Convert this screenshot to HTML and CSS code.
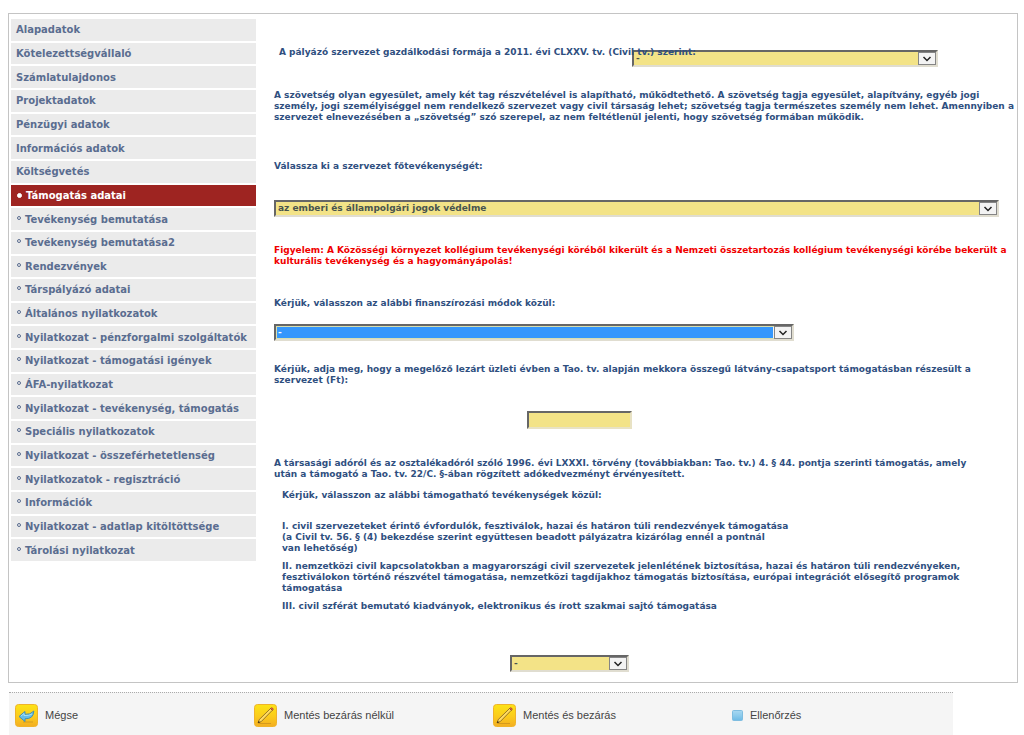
FILE: index.html
```html
<!DOCTYPE html>
<html lang="hu">
<head>
<meta charset="utf-8">
<title>Támogatás adatai</title>
<link rel="stylesheet" href="styles.css">
</head>
<body>
<main class="panel">
  <nav class="menu">
    <a href="#">Alapadatok</a>
    <a href="#">Kötelezettségvállaló</a>
    <a href="#">Számlatulajdonos</a>
    <a href="#">Projektadatok</a>
    <a href="#">Pénzügyi adatok</a>
    <a href="#">Információs adatok</a>
    <a href="#">Költségvetés</a>
    <a href="#" class="active sub" aria-current="page">Támogatás adatai</a>
    <a href="#" class="sub">Tevékenység bemutatása</a>
    <a href="#" class="sub">Tevékenység bemutatása2</a>
    <a href="#" class="sub">Rendezvények</a>
    <a href="#" class="sub">Társpályázó adatai</a>
    <a href="#" class="sub">Általános nyilatkozatok</a>
    <a href="#" class="sub">Nyilatkozat - pénzforgalmi szolgáltatók</a>
    <a href="#" class="sub">Nyilatkozat - támogatási igények</a>
    <a href="#" class="sub">ÁFA-nyilatkozat</a>
    <a href="#" class="sub">Nyilatkozat - tevékenység, támogatás</a>
    <a href="#" class="sub">Speciális nyilatkozatok</a>
    <a href="#" class="sub">Nyilatkozat - összeférhetetlenség</a>
    <a href="#" class="sub">Nyilatkozatok - regisztráció</a>
    <a href="#" class="sub">Információk</a>
    <a href="#" class="sub">Nyilatkozat - adatlap kitöltöttsége</a>
    <a href="#" class="sub">Tárolási nyilatkozat</a>
  </nav>
  <form class="content" id="form">
    <div class="legal-form">
      <label for="legal">A pályázó szervezet gazdálkodási formája a 2011. évi CLXXV. tv. (Civil tv.) szerint:</label>
      <div class="select"><select id="legal"><option>-</option></select><svg viewBox="0 0 18 13"><rect x=".5" y=".5" width="17" height="12"/><path d="M5.500 5L9 8.500L12.500 5"/></svg></div>
    </div>
    <p class="note">A szövetség olyan egyesület, amely két tag részvételével is alapítható, működtethető. A szövetség tagja egyesület, alapítvány, egyéb jogi<br>személy, jogi személyiséggel nem rendelkező szervezet vagy civil társaság lehet; szövetség tagja természetes személy nem lehet. Amennyiben a<br>szervezet elnevezésében a „szövetség” szó szerepel, az nem feltétlenül jelenti, hogy szövetség formában működik.</p>
    <label class="main-label" for="activity">Válassza ki a szervezet főtevékenységét:</label>
    <div class="select main-select"><select id="activity"><option>az emberi és állampolgári jogok védelme</option></select><svg viewBox="0 0 18 13"><rect x=".5" y=".5" width="17" height="12"/><path d="M5.500 5L9 8.500L12.500 5"/></svg></div>
    <p class="warning">Figyelem: A Közösségi környezet kollégium tevékenységi köréből kikerült és a Nemzeti összetartozás kollégium tevékenységi körébe bekerült a<br>kulturális tevékenység és a hagyományápolás!</p>
    <label class="finance-label" for="finance">Kérjük, válasszon az alábbi finanszírozási módok közül:</label>
    <div class="select finance-select"><select id="finance"><option>-</option></select><svg viewBox="0 0 18 13"><rect x=".5" y=".5" width="17" height="12"/><path d="M5.500 5L9 8.500L12.500 5"/></svg></div>
    <label class="amount-label" for="amount">Kérjük, adja meg, hogy a megelőző lezárt üzleti évben a Tao. tv. alapján mekkora összegű látvány-csapatsport támogatásban részesült a<br>szervezet (Ft):</label>
    <input class="amount" id="amount" type="text">
    <p class="tax">A társasági adóról és az osztalékadóról szóló 1996. évi LXXXI. törvény (továbbiakban: Tao. tv.) 4. § 44. pontja szerinti támogatás, amely<br>után a támogató a Tao. tv. 22/C. §-ában rögzített adókedvezményt érvényesített.</p>
    <div class="options">
      <label class="options-label" for="kind">Kérjük, válasszon az alábbi támogatható tevékenységek közül:</label>
      <p>I. civil szervezeteket érintő évfordulók, fesztiválok, hazai és határon túli rendezvények támogatása<br>(a Civil tv. 56. § (4) bekezdése szerint együttesen beadott pályázatra kizárólag ennél a pontnál<br>van lehetőség)</p>
      <p>II. nemzetközi civil kapcsolatokban a magyarországi civil szervezetek jelenlétének biztosítása, hazai és határon túli rendezvényeken,<br>fesztiválokon történő részvétel támogatása, nemzetközi tagdíjakhoz támogatás biztosítása, európai integrációt elősegítő programok<br>támogatása</p>
      <p>III. civil szférát bemutató kiadványok, elektronikus és írott szakmai sajtó támogatása</p>
    </div>
    <div class="select kind-select"><select id="kind"><option>-</option></select><svg viewBox="0 0 18 13"><rect x=".5" y=".5" width="17" height="12"/><path d="M5.500 5L9 8.500L12.500 5"/></svg></div>
  </form>
</main>
<footer class="toolbar">
  <svg class="defs" aria-hidden="true">
    <defs>
      <linearGradient id="gold" x2="0" y2="1"><stop stop-color="#fce316"/><stop offset=".55" stop-color="#fbcb1c"/><stop offset="1" stop-color="#f3ae22"/></linearGradient>
      <linearGradient id="blue" x2="0" y2="1"><stop stop-color="#a9d8f1"/><stop offset=".5" stop-color="#8dcbec"/><stop offset="1" stop-color="#6db9e5"/></linearGradient>
      <symbol id="pencil" viewBox="0 0 23 23">
        <rect x=".5" y=".5" width="22" height="22" rx="3" fill="url(#gold)" stroke="#efb32a"/>
        <path d="M5 19.500h12" stroke="#d59a1c" stroke-width="1"/>
        <path d="M4 19l1.300-3.500L16.500 4.500l1.800 1.800L7.300 17.500z" fill="#ffdc62" stroke="#6b4a18" stroke-width=".7"/>
        <path d="M16.500 4.500l1-.8q1.600 0 1.800 1.800l-1 .8z" fill="#e0604a" stroke="#963c2c" stroke-width=".6"/>
        <path d="M4 19l.7-2 1.400 1.200z" fill="#33240e"/>
      </symbol>
    </defs>
  </svg>
  <button type="button"><svg class="icon" viewBox="0 0 23 23"><rect x=".5" y=".5" width="22" height="22" rx="3" fill="url(#gold)" stroke="#efb32a"/><path d="M8 18h10" stroke="#d39b20"/><path d="M4 12.500L10 7.500v2.800q5 .8 8.800-3.300-.2 8-8.800 7.800v2.700z" fill="#66bde8" stroke="#398bb5" stroke-width=".9"/><path d="M6 12l3-2.500v2q5 .5 8-1.500" fill="none" stroke="#a8e0f6"/></svg>Mégse</button>
  <button type="button"><svg class="icon"><use href="#pencil"/></svg>Mentés bezárás nélkül</button>
  <button type="button"><svg class="icon"><use href="#pencil"/></svg>Mentés és bezárás</button>
  <button type="button"><svg class="small-icon" viewBox="0 0 11 11"><rect x=".5" y=".5" width="10" height="10" rx="1" fill="url(#blue)" stroke="#7fbde0"/></svg>Ellenőrzés</button>
</footer>
</body>
</html>
```
FILE: styles.css
```css
*,
*::before {
  box-sizing: border-box;
}

body {
  margin: 0;
  padding: 13px 6px 0 8px;
  min-height: 100vh;
  display: flex;
  flex-direction: column;
  background: #fff;
  color: #2f4f7f;
  font: bold 9px/11px Verdana, "DejaVu Sans", sans-serif;
}

p {
  margin: 0;
}

.panel {
  display: grid;
  grid-template-columns: 245px 1fr;
  column-gap: 18px;
  padding: 5px 18px 10px 2px;
  border: 1px solid #c4c4c4;
}

.menu {
  display: grid;
  grid-auto-rows: 1fr;
  gap: 2px;
  align-self: start;
  min-height: 542px;
}

.menu a {
  display: flex;
  align-items: center;
  padding: 1px 5px 0;
  background: #ebebeb;
  color: #5a6d90;
  font-size: 10px;
  line-height: 14px;
  text-decoration: none;
  white-space: nowrap;
}

.menu .sub::before {
  content: "";
  width: 4px;
  height: 4px;
  margin: 0 4px 4px 1px;
  border: 1px solid #5a6d90;
  border-radius: 50%;
}

.menu .active {
  background: #9e2421;
  color: #fff;
}

.menu .active::before {
  width: 5px;
  height: 5px;
  margin-bottom: 0;
  background: #fff;
  border-color: #fff;
}

.content {
  display: flex;
  flex-direction: column;
  align-items: flex-start;
  min-width: 0;
  padding-top: 28px;
  white-space: nowrap;
}

.legal-form {
  display: grid;
  grid-template-columns: 353px 306px;
  padding-left: 5px;
}

.legal-form label {
  grid-area: 1 / 1 / 2 / 3;
  z-index: 1;
  pointer-events: none;
}

.legal-form .select {
  grid-area: 1 / 2;
  margin-top: 3px;
}

.select {
  position: relative;
  height: 17px;
}

.select select {
  appearance: none;
  display: block;
  width: 100%;
  height: 100%;
  padding: 0 22px 0 2px;
  border: 2px solid;
  border-color: #666 #e0ddd0 #e0ddd0 #666;
  border-radius: 0;
  background: #f3e387;
  color: #48544e;
  font: inherit;
}

.select svg {
  position: absolute;
  top: 2px;
  right: 2px;
  width: 18px;
  height: 13px;
  fill: #f3f3f3;
  stroke: #858585;
  pointer-events: none;
}

.select path {
  fill: none;
  stroke: #222;
  stroke-width: 1.5;
}

.note {
  margin-top: 23px;
}

.main-label {
  margin-top: 38px;
}

.main-select {
  width: 100%;
  margin-top: 28px;
}

.warning {
  margin-top: 28px;
  color: #f00000;
}

.finance-label {
  margin-top: 31px;
}

.finance-select {
  width: 520px;
  margin-top: 15px;
}

.finance-select select {
  background: linear-gradient(#3597fc, #3597fc) 0 0 / calc(100% - 19px) 100% no-repeat #f3f3f3;
  box-shadow: inset 0 0 0 1px #d8dfb0;
  color: #fff;
}

.amount-label {
  margin-top: 23px;
}

.amount {
  width: 105px;
  height: 18px;
  margin: 25px 0 0 253px;
  padding: 0 2px;
  border: 2px solid;
  border-color: #666 #e8e2c4 #e8e2c4 #666;
  background: #f3e387;
  font: inherit;
}

.tax {
  margin-top: 29px;
}

.options {
  display: flex;
  flex-direction: column;
  gap: 7px;
  margin-top: 10px;
  padding-left: 8px;
}

.options-label {
  margin-bottom: 13px;
}

.kind-select {
  width: 119px;
  margin: 43px 0 0 236px;
}

.toolbar {
  flex: 1;
  display: grid;
  grid-template-columns: 239px 239px 239px 1fr;
  align-items: start;
  min-height: 43px;
  margin: 9px 65px 0 1px;
  padding: 10px 0 8px 6px;
  border-top: 1px dotted #aaa;
  background: #f5f5f5;
}

.toolbar button {
  display: flex;
  align-items: center;
  gap: 7px;
  height: 24px;
  padding: 0;
  border: 0;
  background: none;
  color: #444;
  font: 11px/14px "Liberation Sans", Arial, sans-serif;
}

.defs {
  position: absolute;
  width: 0;
  height: 0;
}

.icon {
  width: 23px;
  height: 23px;
}

.small-icon {
  width: 11px;
  height: 11px;
}
```
